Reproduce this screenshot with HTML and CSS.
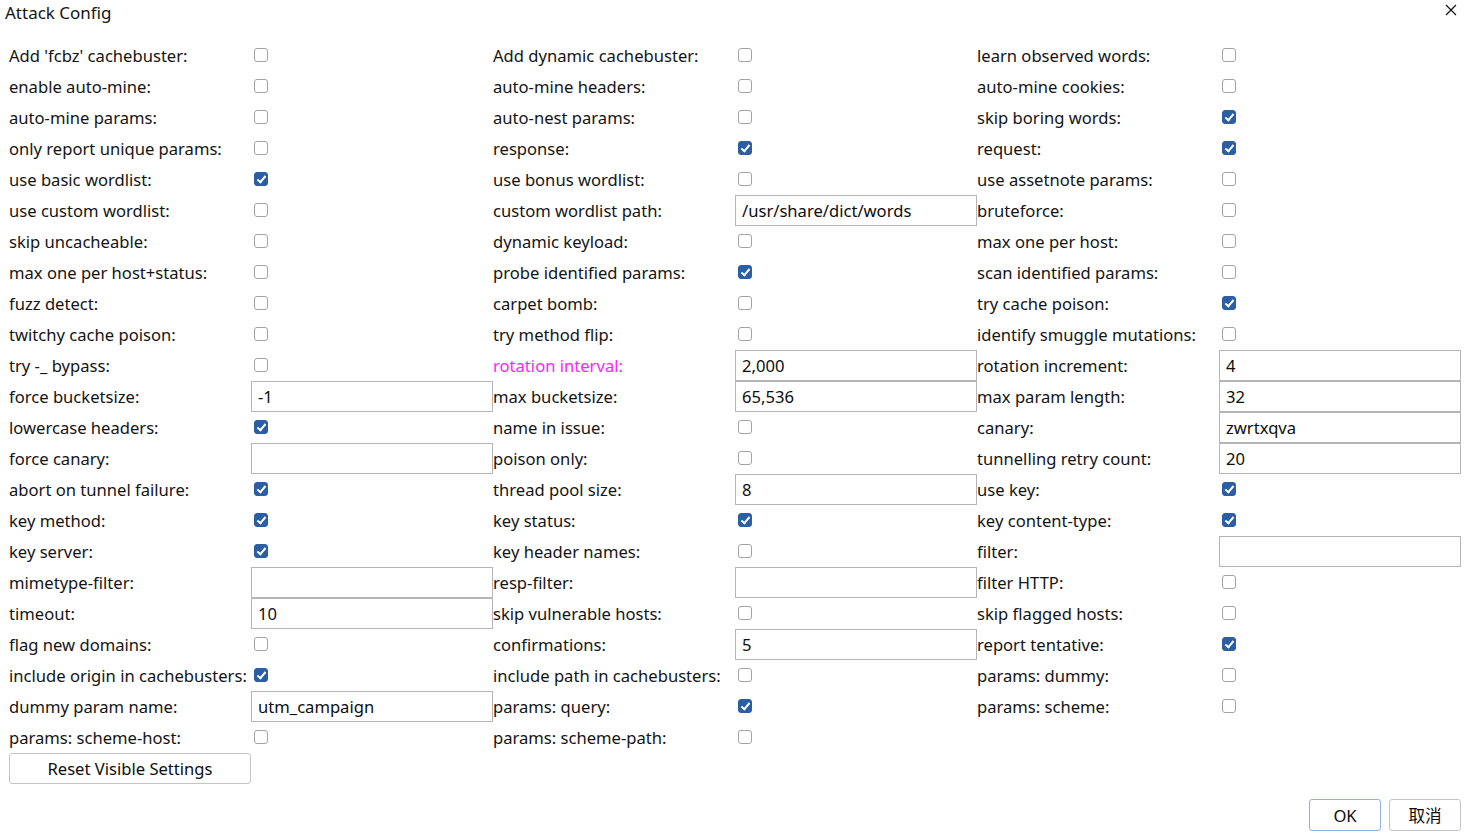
FILE: index.html
```html
<!DOCTYPE html>
<html>
<head>
<meta charset="utf-8">
<title>Attack Config</title>
<link rel="stylesheet" href="styles.css">
</head>
<body>
<div class="dialog">
  <div class="titlebar">
    <span class="title">Attack Config</span>
    <span class="close"><svg width="12" height="12" viewBox="0 0 12 12"><path d="M1 1 L11 11 M11 1 L1 11" stroke="#111" stroke-width="1.2" fill="none"/></svg></span>
  </div>
  <div class="grid">
    <div class="lbl">Add 'fcbz' cachebuster:</div><div class="cell"><span class="cb"></span></div>
    <div class="lbl">Add dynamic cachebuster:</div><div class="cell"><span class="cb"></span></div>
    <div class="lbl">learn observed words:</div><div class="cell"><span class="cb"></span></div>

    <div class="lbl">enable auto-mine:</div><div class="cell"><span class="cb"></span></div>
    <div class="lbl">auto-mine headers:</div><div class="cell"><span class="cb"></span></div>
    <div class="lbl">auto-mine cookies:</div><div class="cell"><span class="cb"></span></div>

    <div class="lbl">auto-mine params:</div><div class="cell"><span class="cb"></span></div>
    <div class="lbl">auto-nest params:</div><div class="cell"><span class="cb"></span></div>
    <div class="lbl">skip boring words:</div><div class="cell"><span class="cb on"></span></div>

    <div class="lbl">only report unique params:</div><div class="cell"><span class="cb"></span></div>
    <div class="lbl">response:</div><div class="cell"><span class="cb on"></span></div>
    <div class="lbl">request:</div><div class="cell"><span class="cb on"></span></div>

    <div class="lbl">use basic wordlist:</div><div class="cell"><span class="cb on"></span></div>
    <div class="lbl">use bonus wordlist:</div><div class="cell"><span class="cb"></span></div>
    <div class="lbl">use assetnote params:</div><div class="cell"><span class="cb"></span></div>

    <div class="lbl">use custom wordlist:</div><div class="cell"><span class="cb"></span></div>
    <div class="lbl">custom wordlist path:</div><div class="field">/usr/share/dict/words</div>
    <div class="lbl">bruteforce:</div><div class="cell"><span class="cb"></span></div>

    <div class="lbl">skip uncacheable:</div><div class="cell"><span class="cb"></span></div>
    <div class="lbl">dynamic keyload:</div><div class="cell"><span class="cb"></span></div>
    <div class="lbl">max one per host:</div><div class="cell"><span class="cb"></span></div>

    <div class="lbl">max one per host+status:</div><div class="cell"><span class="cb"></span></div>
    <div class="lbl">probe identified params:</div><div class="cell"><span class="cb on"></span></div>
    <div class="lbl">scan identified params:</div><div class="cell"><span class="cb"></span></div>

    <div class="lbl">fuzz detect:</div><div class="cell"><span class="cb"></span></div>
    <div class="lbl">carpet bomb:</div><div class="cell"><span class="cb"></span></div>
    <div class="lbl">try cache poison:</div><div class="cell"><span class="cb on"></span></div>

    <div class="lbl">twitchy cache poison:</div><div class="cell"><span class="cb"></span></div>
    <div class="lbl">try method flip:</div><div class="cell"><span class="cb"></span></div>
    <div class="lbl">identify smuggle mutations:</div><div class="cell"><span class="cb"></span></div>

    <div class="lbl">try -_ bypass:</div><div class="cell"><span class="cb"></span></div>
    <div class="lbl hl">rotation interval:</div><div class="field">2,000</div>
    <div class="lbl">rotation increment:</div><div class="field">4</div>

    <div class="lbl">force bucketsize:</div><div class="field">-1</div>
    <div class="lbl">max bucketsize:</div><div class="field">65,536</div>
    <div class="lbl">max param length:</div><div class="field">32</div>

    <div class="lbl">lowercase headers:</div><div class="cell"><span class="cb on"></span></div>
    <div class="lbl">name in issue:</div><div class="cell"><span class="cb"></span></div>
    <div class="lbl">canary:</div><div class="field">zwrtxqva</div>

    <div class="lbl">force canary:</div><div class="field"></div>
    <div class="lbl">poison only:</div><div class="cell"><span class="cb"></span></div>
    <div class="lbl">tunnelling retry count:</div><div class="field">20</div>

    <div class="lbl">abort on tunnel failure:</div><div class="cell"><span class="cb on"></span></div>
    <div class="lbl">thread pool size:</div><div class="field">8</div>
    <div class="lbl">use key:</div><div class="cell"><span class="cb on"></span></div>

    <div class="lbl">key method:</div><div class="cell"><span class="cb on"></span></div>
    <div class="lbl">key status:</div><div class="cell"><span class="cb on"></span></div>
    <div class="lbl">key content-type:</div><div class="cell"><span class="cb on"></span></div>

    <div class="lbl">key server:</div><div class="cell"><span class="cb on"></span></div>
    <div class="lbl">key header names:</div><div class="cell"><span class="cb"></span></div>
    <div class="lbl">filter:</div><div class="field"></div>

    <div class="lbl">mimetype-filter:</div><div class="field"></div>
    <div class="lbl">resp-filter:</div><div class="field"></div>
    <div class="lbl">filter HTTP:</div><div class="cell"><span class="cb"></span></div>

    <div class="lbl">timeout:</div><div class="field">10</div>
    <div class="lbl">skip vulnerable hosts:</div><div class="cell"><span class="cb"></span></div>
    <div class="lbl">skip flagged hosts:</div><div class="cell"><span class="cb"></span></div>

    <div class="lbl">flag new domains:</div><div class="cell"><span class="cb"></span></div>
    <div class="lbl">confirmations:</div><div class="field">5</div>
    <div class="lbl">report tentative:</div><div class="cell"><span class="cb on"></span></div>

    <div class="lbl">include origin in cachebusters:</div><div class="cell"><span class="cb on"></span></div>
    <div class="lbl">include path in cachebusters:</div><div class="cell"><span class="cb"></span></div>
    <div class="lbl">params: dummy:</div><div class="cell"><span class="cb"></span></div>

    <div class="lbl">dummy param name:</div><div class="field">utm_campaign</div>
    <div class="lbl">params: query:</div><div class="cell"><span class="cb on"></span></div>
    <div class="lbl">params: scheme:</div><div class="cell"><span class="cb"></span></div>

    <div class="lbl">params: scheme-host:</div><div class="cell"><span class="cb"></span></div>
    <div class="lbl">params: scheme-path:</div><div class="cell"><span class="cb"></span></div>
  </div>
  <div class="reset-row">
    <button class="btn reset">Reset Visible Settings</button>
  </div>
  <div class="footer">
    <button class="btn ok">OK</button>
    <button class="btn cancel">取消</button>
  </div>
</div>
</body>
</html>
```
FILE: styles.css
```css
html, body {
  margin: 0;
  padding: 0;
  background: #ffffff;
}
body {
  font-family: "Noto Sans", "Open Sans", "Noto Sans CJK SC", sans-serif;
  font-size: 16.6px;
  color: #141414;
}
.dialog {
  width: 1473px;
  height: 840px;
  display: flex;
  flex-direction: column;
}
.titlebar {
  height: 40px;
  display: flex;
  justify-content: space-between;
  align-items: flex-start;
  padding: 3px 16px 0 5px;
  box-sizing: border-box;
}
.title {
  line-height: 20px;
  font-size: 17px;
  color: #141414;
}
.close {
  display: flex;
  margin-top: 1px;
}
.grid {
  display: grid;
  grid-template-columns: repeat(6, 242px);
  grid-auto-rows: 31px;
  padding-left: 9px;
}
.lbl {
  display: flex;
  align-items: center;
  white-space: nowrap;
  line-height: 20px;
}
.lbl.hl {
  color: #ff22ff;
}
.cell {
  display: flex;
  align-items: center;
  padding-left: 3px;
}
.cb {
  width: 14px;
  height: 14px;
  box-sizing: border-box;
  border: 1px solid #a3a3a3;
  border-radius: 3px;
  background: #ffffff;
  position: relative;
  margin-top: -1px;
}
.cb.on {
  background: #2b5ea5;
  border-color: #2b5ea5;
}
.cb.on::after {
  content: "";
  position: absolute;
  left: 4px;
  top: 1px;
  width: 3px;
  height: 7px;
  border: solid #ffffff;
  border-width: 0 2px 2px 0;
  transform: rotate(40deg);
}
.field {
  border: 1px solid #b5b5b5;
  box-sizing: border-box;
  display: flex;
  align-items: center;
  padding-left: 6px;
  color: #0d0d0d;
  white-space: nowrap;
}
.reset-row {
  padding-left: 9px;
}
.btn {
  font-family: "Noto Sans", "Open Sans", "Noto Sans CJK SC", sans-serif;
  font-size: 16.6px;
  color: #0d0d0d;
  background: #ffffff;
  border: 1px solid #c4c4c4;
  border-radius: 3px;
  height: 31px;
  padding: 0;
  box-sizing: border-box;
}
.reset {
  width: 242px;
}
.footer {
  display: flex;
  justify-content: flex-end;
  gap: 8px;
  padding: 15px 12px 0 0;
}
.ok, .cancel {
  width: 72px;
  height: 32px;
}
.ok {
  border-color: #8ab3e6;
}
.cancel {
  font-family: "Noto Sans CJK SC", sans-serif;
}
```
